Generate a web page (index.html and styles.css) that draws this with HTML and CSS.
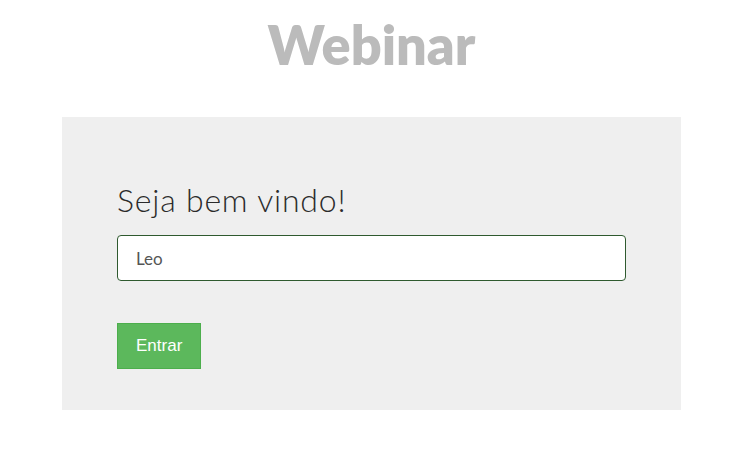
FILE: index.html
```html
<!DOCTYPE html>
<html lang="pt">
<head>
    <meta charset="UTF-8">
    <meta name="viewport" content="width=device-width, initial-scale=1.0">
    <title>Webinar</title>
    <link rel="stylesheet" href="styles.css">
</head>
<body>

<!-- === Page title === -->
<h1 class="page-title">Webinar</h1>

<!-- === Login panel === -->
<div class="login-panel">
    <h2>Seja bem vindo!</h2>
    <form class="login-form">
        <input type="text" name="nome" value="Leo">
        <button type="submit" class="enter-btn">Entrar</button>
    </form>
</div>

</body>
</html>
```

FILE: styles.css
```css
/* === Page Styling === */
body {
    margin: 0;
    font-family: Lato, "Open Sans", sans-serif;
    background-color: #fff;
    color: #333;
}

.page-title {
    margin: 12px 0 0;
    text-align: center;
    font-size: 54px;
    font-weight: 800;
    line-height: 66px;
    color: #bbb;
}

/* === Panel === */
.login-panel {
    background-color: #efefef;
    width: 619px;
    box-sizing: border-box;
    margin: 39px auto 0;
    padding: 64px 55px 41px;
}

.login-panel h2 {
    margin: 0 0 16px;
    font-size: 32px;
    font-weight: 300;
    letter-spacing: 0.8px;
    line-height: 38px;
    color: #2b2b2b;
}

/* === Form === */
.login-form input {
    display: block;
    width: 100%;
    height: 46px;
    box-sizing: border-box;
    padding: 0 18px;
    border: 1px solid #2f5a2f;
    border-radius: 4px;
    background-color: #fff;
    font-family: inherit;
    font-size: 17px;
    color: #555;
    margin-bottom: 42px;
}

.login-form .enter-btn {
    display: block;
    height: 46px;
    padding: 0 18px;
    background-color: #5cb85c;
    border: 1px solid #4cae4c;
    color: #fff;
    font-family: "Liberation Sans", Arial, sans-serif;
    font-size: 17px;
    cursor: pointer;
}
```
